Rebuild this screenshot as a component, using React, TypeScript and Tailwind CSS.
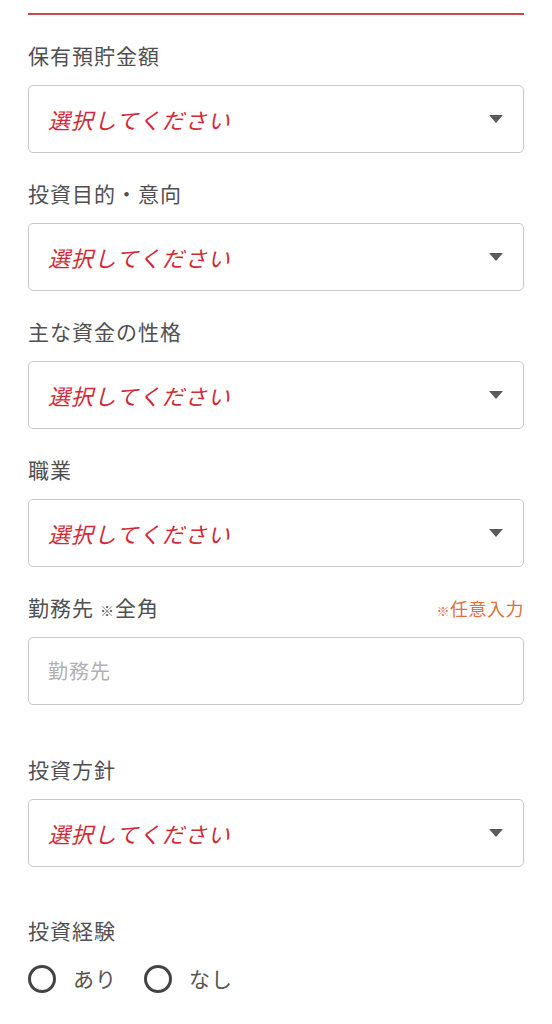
import React from "react";

const font = { fontFamily: '"Noto Sans CJK JP", "Noto Sans", sans-serif' };

const Caret = () => (
  <svg width="14" height="8" viewBox="0 0 14 8" className="shrink-0">
    <path d="M0 0 L14 0 L7 8 Z" fill="#5a5a5a" />
  </svg>
);

const Label = ({ text, extra, optional }: { text: string; extra?: boolean; optional?: boolean }) => (
  <div className="flex items-center justify-between h-[30px]">
    <span className="text-[21px] text-[#505050] tracking-[1px]">
      {text}
      {extra && (
        <span className="ml-[6px]">
          <span className="text-[14px]">※</span>全角
        </span>
      )}
    </span>
    {optional && (
      <span className="text-[18px] text-[#e0703c] tracking-[0.5px]">
        <span className="text-[13px]">※</span>任意入力
      </span>
    )}
  </div>
);

const SelectField = ({ label, top = "mt-[26px]" }: { label: string; top?: string }) => (
  <div className={top}>
    <Label text={label} />
    <div className="mt-[14px] h-[68px] rounded-[5px] border border-[#c8c8c8] bg-white flex items-center justify-between pl-[19px] pr-[20px]">
      <span className="text-[22px] italic text-[#cf2b37] tracking-[1px]">選択してください</span>
      <Caret />
    </div>
  </div>
);

const Radio = ({ text }: { text: string }) => (
  <div className="flex items-center gap-[17px]">
    <div className="w-[28px] h-[28px] rounded-full border-[3px] border-[#444]" />
    <span className="text-[21px] text-[#555] tracking-[1px]">{text}</span>
  </div>
);

export default function App() {
  return (
    <div className="min-h-[1024px] bg-white px-[28px] pt-[13px]" style={font}>
      <div className="h-[2px] bg-[#c8474f]" />
      <SelectField label="保有預貯金額" />
      <SelectField label="投資目的・意向" />
      <SelectField label="主な資金の性格" />
      <SelectField label="職業" />

      <div className="mt-[26px]">
        <Label text="勤務先" extra optional />
        <div className="mt-[14px] h-[68px] rounded-[5px] border border-[#c8c8c8] bg-white flex items-center pl-[19px]">
          <span className="text-[20px] text-[#b0b0b0] tracking-[1px]">勤務先</span>
        </div>
      </div>

      <SelectField label="投資方針" top="mt-[50px]" />

      <div className="mt-[49px]">
        <Label text="投資経験" />
        <div className="mt-[17px] flex items-center gap-[27px]">
          <Radio text="あり" />
          <Radio text="なし" />
        </div>
      </div>
    </div>
  );
}
